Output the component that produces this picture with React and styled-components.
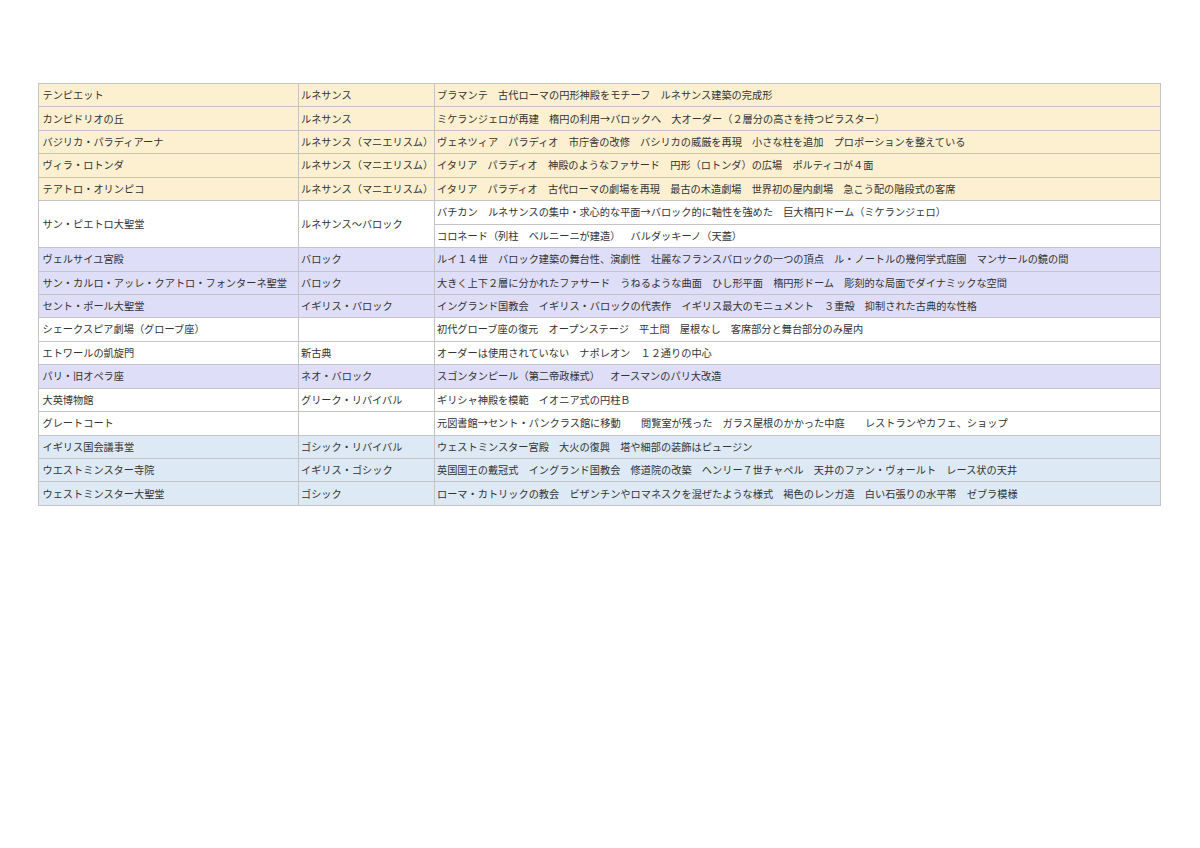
import React from "react";
import styled, { createGlobalStyle } from "styled-components";

const GlobalStyle = createGlobalStyle`
  html, body {
    margin: 0;
    padding: 0;
    background: #ffffff;
  }
  body {
    font-family: "Noto Sans CJK JP", "Noto Sans", sans-serif;
    color: #333333;
  }
`;

const Page = styled.div`
  padding: 83px 0 0 38px;
`;

const Table = styled.table`
  border-collapse: collapse;
  table-layout: fixed;
  width: 1123px;
  font-size: 10.2px;
  text-spacing-trim: space-all;
`;

const Row = styled.tr`
  height: 23.45px;
  background: ${(p) => p.$bg || "#ffffff"};
`;

const Cell = styled.td`
  border: 1px solid #c4c4c4;
  padding: 0 0 0 ${(p) => p.$pad || "3px"};
  white-space: nowrap;
  overflow: visible;
  vertical-align: middle;
  line-height: 1;
`;

const COLORS = {
  gold: "#fdf0d0",
  lilac: "#dedef8",
  blue: "#ddeaf5",
  white: "#ffffff",
};

const rows = [
  { c: "gold", name: "テンピエット", style: "ルネサンス", notes: "ブラマンテ　古代ローマの円形神殿をモチーフ　ルネサンス建築の完成形" },
  { c: "gold", name: "カンピドリオの丘", style: "ルネサンス", notes: "ミケランジェロが再建　楕円の利用→バロックへ　大オーダー（２層分の高さを持つピラスター）" },
  { c: "gold", name: "バジリカ・パラディアーナ", style: "ルネサンス（マニエリスム）", notes: "ヴェネツィア　パラディオ　市庁舎の改修　バシリカの威厳を再現　小さな柱を追加　プロポーションを整えている" },
  { c: "gold", name: "ヴィラ・ロトンダ", style: "ルネサンス（マニエリスム）", notes: "イタリア　パラディオ　神殿のようなファサード　円形（ロトンダ）の広場　ポルティコが４面" },
  { c: "gold", name: "テアトロ・オリンピコ", style: "ルネサンス（マニエリスム）", notes: "イタリア　パラディオ　古代ローマの劇場を再現　最古の木造劇場　世界初の屋内劇場　急こう配の階段式の客席" },
  {
    c: "white",
    name: "サン・ピエトロ大聖堂",
    style: "ルネサンス～バロック",
    notes: "バチカン　ルネサンスの集中・求心的な平面→バロック的に軸性を強めた　巨大楕円ドーム（ミケランジェロ）",
    extra: "コロネード（列柱　ベルニーニが建造）　バルダッキーノ（天蓋）",
  },
  { c: "lilac", name: "ヴェルサイユ宮殿", style: "バロック", notes: "ルイ１４世　バロック建築の舞台性、演劇性　壮麗なフランスバロックの一つの頂点　ル・ノートルの幾何学式庭園　マンサールの鏡の間" },
  { c: "lilac", name: "サン・カルロ・アッレ・クアトロ・フォンターネ聖堂", style: "バロック", notes: "大きく上下２層に分かれたファサード　うねるような曲面　ひし形平面　楕円形ドーム　彫刻的な局面でダイナミックな空間" },
  { c: "lilac", name: "セント・ポール大聖堂", style: "イギリス・バロック", notes: "イングランド国教会　イギリス・バロックの代表作　イギリス最大のモニュメント　３重殻　抑制された古典的な性格" },
  { c: "white", name: "シェークスピア劇場（グローブ座）", style: "", notes: "初代グローブ座の復元　オープンステージ　平土間　屋根なし　客席部分と舞台部分のみ屋内" },
  { c: "white", name: "エトワールの凱旋門", style: "新古典", notes: "オーダーは使用されていない　ナポレオン　１２通りの中心" },
  { c: "lilac", name: "パリ・旧オペラ座", style: "ネオ・バロック", notes: "スゴンタンピール（第二帝政様式）　オースマンのパリ大改造" },
  { c: "white", name: "大英博物館", style: "グリーク・リバイバル", notes: "ギリシャ神殿を模範　イオニア式の円柱Ｂ" },
  { c: "white", name: "グレートコート", style: "", notes: "元図書館→セント・パンクラス館に移動　　閲覧室が残った　ガラス屋根のかかった中庭　　レストランやカフェ、ショップ" },
  { c: "blue", name: "イギリス国会議事堂", style: "ゴシック・リバイバル", notes: "ウェストミンスター宮殿　大火の復興　塔や細部の装飾はピュージン" },
  { c: "blue", name: "ウエストミンスター寺院", style: "イギリス・ゴシック", notes: "英国国王の戴冠式　イングランド国教会　修道院の改築　ヘンリー７世チャペル　天井のファン・ヴォールト　レース状の天井" },
  { c: "blue", name: "ウェストミンスター大聖堂", style: "ゴシック", notes: "ローマ・カトリックの教会　ビザンチンやロマネスクを混ぜたような様式　褐色のレンガ造　白い石張りの水平帯　ゼブラ模様" },
];

export default function App() {
  return (
    <>
      <GlobalStyle />
      <Page>
        <Table>
          <colgroup>
            <col style={{ width: 260 }} />
            <col style={{ width: 136 }} />
            <col />
          </colgroup>
          <tbody>
            {rows.map((r) => {
              const span = r.extra ? 2 : 1;
              return (
                <React.Fragment key={r.name}>
                  <Row $bg={COLORS[r.c]}>
                    <Cell rowSpan={span} $pad="3.5px">{r.name}</Cell>
                    <Cell rowSpan={span} $pad="2px">{r.style}</Cell>
                    <Cell $pad="2px">{r.notes}</Cell>
                  </Row>
                  {r.extra && (
                    <Row $bg={COLORS[r.c]}>
                      <Cell $pad="2px">{r.extra}</Cell>
                    </Row>
                  )}
                </React.Fragment>
              );
            })}
          </tbody>
        </Table>
      </Page>
    </>
  );
}
